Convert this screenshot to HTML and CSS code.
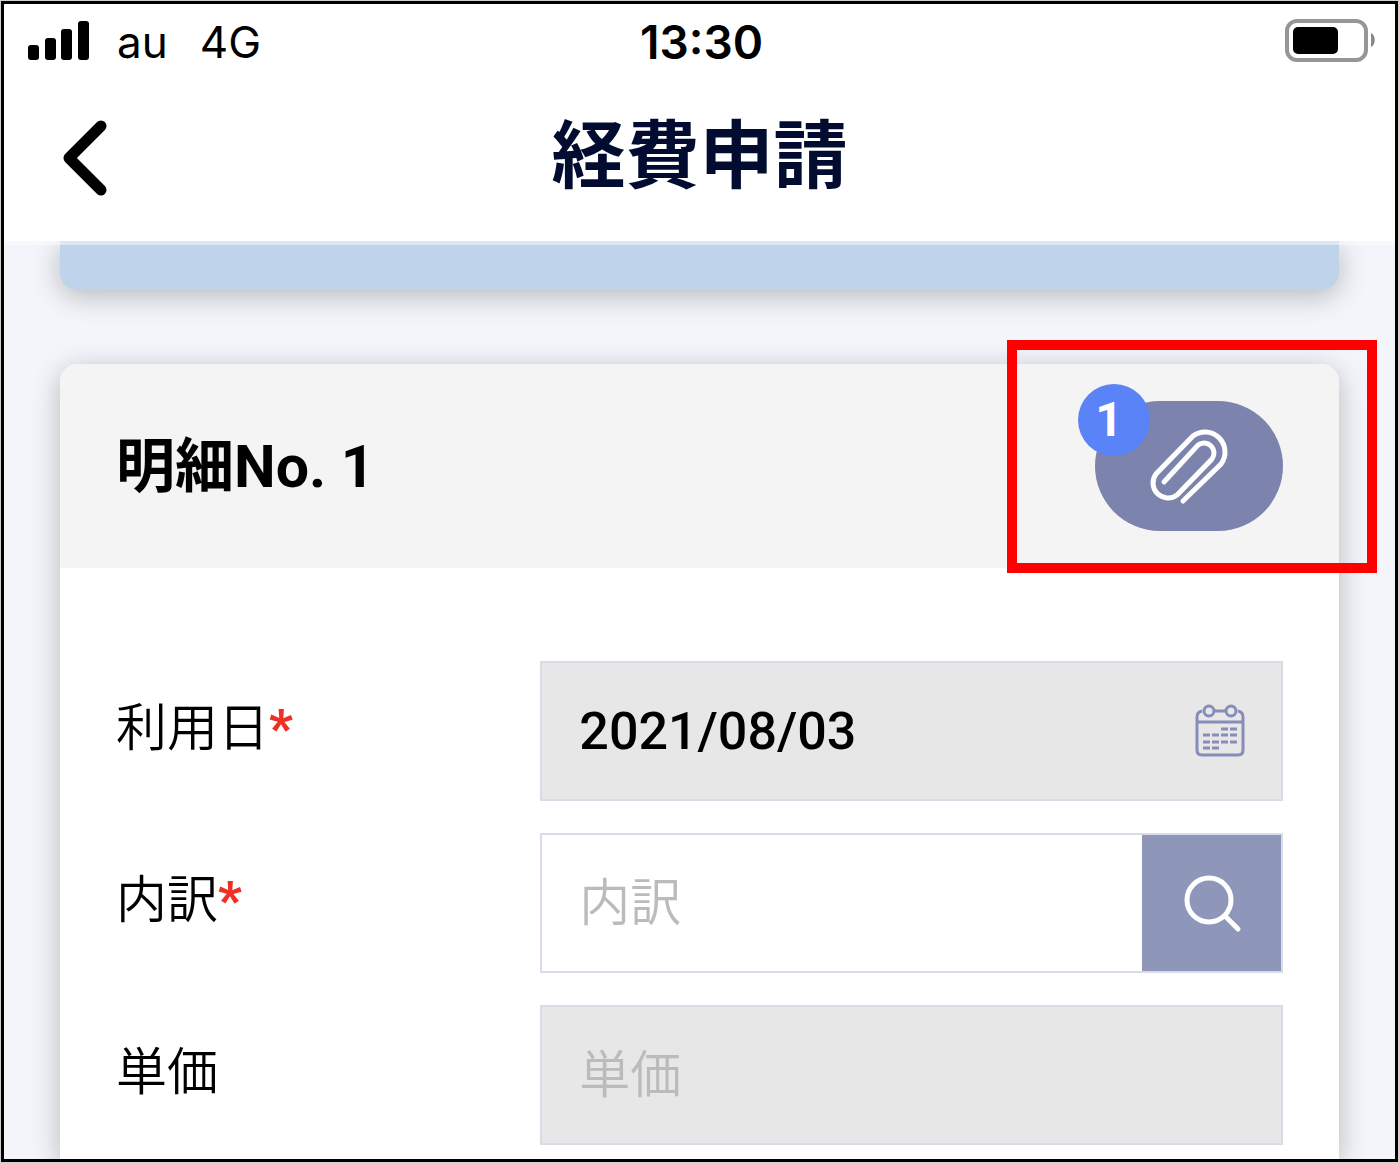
FILE: index.html
```html
<!DOCTYPE html>
<html lang="ja">
<head>
  <meta charset="UTF-8" />
  <meta name="viewport" content="width=device-width, initial-scale=1.0"/>
  <title>経費申請</title>
  <link rel="stylesheet" href="styles.css">
</head>
<body>
  <div class="screen">
    <div class="status-bar">
      <div class="carrier">
        <svg class="signal" viewBox="0 0 62 42" width="62" height="42" aria-hidden="true">
          <rect x="0" y="24" width="11" height="15" rx="3"/>
          <rect x="17" y="17" width="11" height="22" rx="3"/>
          <rect x="33" y="8" width="11" height="31" rx="3"/>
          <rect x="50" y="0" width="11" height="39" rx="3"/>
        </svg>
        <span>au</span>
        <span>4G</span>
      </div>
      <div class="time">13:30</div>
      <svg class="battery" viewBox="0 0 90 44" width="90" height="44" aria-hidden="true">
        <rect x="2" y="1" width="79" height="39" rx="10" fill="none" stroke="#969696" stroke-width="4"/>
        <rect x="8" y="7" width="45" height="27" rx="5"/>
        <path d="M86 13c5 2 5 12 0 14z" fill="#8a8a8a"/>
      </svg>
    </div>

    <header class="nav">
      <button class="back" type="button" aria-label="戻る">
        <svg viewBox="0 0 46 76" width="46" height="76" aria-hidden="true">
          <path d="M39 7L7 39l32 32"/>
        </svg>
      </button>
      <h1>経費申請</h1>
    </header>

    <main class="content">
      <div class="summary"></div>

      <section class="card">
        <div class="card-header">
          <h2>明細No. 1</h2>
          <button class="attach" type="button" aria-label="添付ファイル">
            <svg viewBox="0 0 80 76" width="80" height="76" aria-hidden="true">
              <path d="M15 54L49 17A10 10 0 0 1 63 31L28 67A15 15 0 0 1 7 46L44 8A20 20 0 0 1 72 36L34 73"/>
            </svg>
            <span class="badge">1</span>
          </button>
          <div class="highlight"></div>
        </div>

        <form class="card-body">
          <div class="row">
            <label for="date">利用日<span class="required">*</span></label>
            <div class="field disabled">
              <input type="text" id="date" value="2021/08/03" readonly>
              <svg class="calendar" viewBox="0 0 50 54" width="50" height="54" aria-hidden="true">
                <path d="M7 7Q2 8 2 13v33q0 5 5 5h36q5 0 5-5V13q0-5-5-6M19 7h12M2 18h46"/>
                <circle cx="14" cy="7" r="5"/>
                <circle cx="36" cy="7" r="5"/>
                <path d="M26 25h7M35 25h7M8 31h7M17 31h7M26 31h7M35 31h7M8 38h7M17 38h7M26 38h7M35 38h7M8 44h7M17 44h7"/>
              </svg>
            </div>
          </div>

          <div class="row">
            <label for="breakdown">内訳<span class="required">*</span></label>
            <div class="field">
              <input type="text" id="breakdown" placeholder="内訳">
              <button class="search" type="button" aria-label="検索">
                <svg viewBox="0 0 58 58" width="58" height="58" aria-hidden="true">
                  <circle cx="26" cy="26" r="22"/>
                  <path d="M42 42l13 13"/>
                </svg>
              </button>
            </div>
          </div>

          <div class="row">
            <label for="price">単価</label>
            <div class="field disabled">
              <input type="text" id="price" placeholder="単価" readonly>
            </div>
          </div>
        </form>
      </section>
    </main>
  </div>
</body>
</html>
```

FILE: styles.css
```css
* {
  box-sizing: border-box;
}
body {
  margin: 0;
  padding: 1px;
  background: #ccd3cf;
  color: #000;
  font-family: Roboto, "Noto Sans CJK JP", sans-serif;
}
h1, h2 {
  margin: 0;
}
button {
  padding: 0;
  border: 0;
  background: none;
  font-family: inherit;
  cursor: pointer;
}
svg {
  overflow: visible;
}
.screen {
  display: flex;
  flex-direction: column;
  min-height: calc(100vh - 2px);
  border: 3px solid #000;
  background: #f3f5fa;
  overflow: hidden;
}
.status-bar {
  display: grid;
  grid-template-columns: 1fr auto 1fr;
  align-items: center;
  height: 76px;
  padding: 0 20px 0 24px;
  background: #fff;
  font-family: Inter, sans-serif;
  font-size: 44px;
}
.carrier {
  display: flex;
  align-items: center;
  gap: 32px;
}
.signal {
  margin-right: -5px;
}
.time {
  font-size: 46px;
  font-weight: 600;
}
.battery {
  justify-self: end;
}
.nav {
  position: relative;
  z-index: 1;
  display: grid;
  grid-template-columns: 1fr auto 1fr;
  align-items: center;
  height: 161px;
  padding: 0 58px 8px;
  background: #fff;
  box-shadow: 0 4px 0 rgba(255, 255, 255, 0.45);
}
.nav h1 {
  color: #020c30;
  font-size: 74px;
  line-height: 1;
}
.back {
  justify-self: start;
}
.back svg {
  display: block;
  fill: none;
  stroke: #000;
  stroke-width: 11;
  stroke-linecap: round;
  stroke-linejoin: round;
}
.content {
  display: flex;
  flex: 1;
  flex-direction: column;
  gap: 74px;
  padding: 0 56px;
}
.summary {
  height: 49px;
  border-radius: 0 0 18px 18px;
  background: #bfd3eb;
  box-shadow: 0 6px 28px rgba(0, 0, 0, 0.25);
}
.card {
  flex: 1;
  border-radius: 18px 18px 0 0;
  background: #fff;
  box-shadow: 0 6px 28px rgba(0, 0, 0, 0.25);
}
.card-header {
  position: relative;
  display: flex;
  align-items: center;
  justify-content: space-between;
  height: 204px;
  padding: 0 56px;
  border-radius: 18px 18px 0 0;
  background: #f4f4f4;
}
.card-header h2 {
  font-size: 59px;
  line-height: 1;
}
.attach {
  position: relative;
  display: flex;
  align-items: center;
  justify-content: center;
  width: 188px;
  height: 130px;
  border-radius: 65px;
  background: #7c83ad;
}
.attach svg {
  fill: none;
  stroke: #fff;
  stroke-width: 5;
  stroke-linecap: round;
}
.badge {
  position: absolute;
  top: -17px;
  left: -17px;
  width: 72px;
  height: 72px;
  padding-right: 10px;
  border-radius: 50%;
  background: #5983f6;
  color: #fff;
  font-size: 48px;
  font-weight: bold;
  line-height: 72px;
  text-align: center;
}
.highlight {
  position: absolute;
  top: -24px;
  right: -38px;
  bottom: -5px;
  width: 370px;
  border: 10px solid #f00;
  pointer-events: none;
}
.card-body {
  display: flex;
  flex-direction: column;
  gap: 32px;
  padding: 93px 56px 14px;
}
.row {
  display: grid;
  grid-template-columns: minmax(0, 4fr) minmax(0, 7fr);
  align-items: center;
}
.row label {
  padding-bottom: 4px;
  font-size: 51px;
  font-weight: 350;
  line-height: 60px;
}
.required {
  color: #ee3124;
  font-weight: 900;
}
.field {
  display: flex;
  align-items: center;
  height: 140px;
  border: 2px solid #d9dce6;
  background: #fff;
}
.field.disabled {
  background: #e7e7e7;
}
.field input {
  flex: 1;
  min-width: 0;
  height: 100%;
  padding: 0 37px;
  border: 0;
  outline: 0;
  background: transparent;
  color: #000;
  font-family: inherit;
  font-size: 52px;
  font-weight: 500;
}
.field input::placeholder {
  color: #bbb;
  font-size: 51px;
  font-weight: 350;
  opacity: 1;
}
.calendar {
  margin-right: 36px;
  fill: none;
  stroke: #858db8;
  stroke-width: 3;
}
.search {
  display: flex;
  align-items: center;
  justify-content: center;
  width: 139px;
  height: 100%;
  background: #8e97ba;
}
.search svg {
  fill: none;
  stroke: #fff;
  stroke-width: 5;
  stroke-linecap: round;
}
```
